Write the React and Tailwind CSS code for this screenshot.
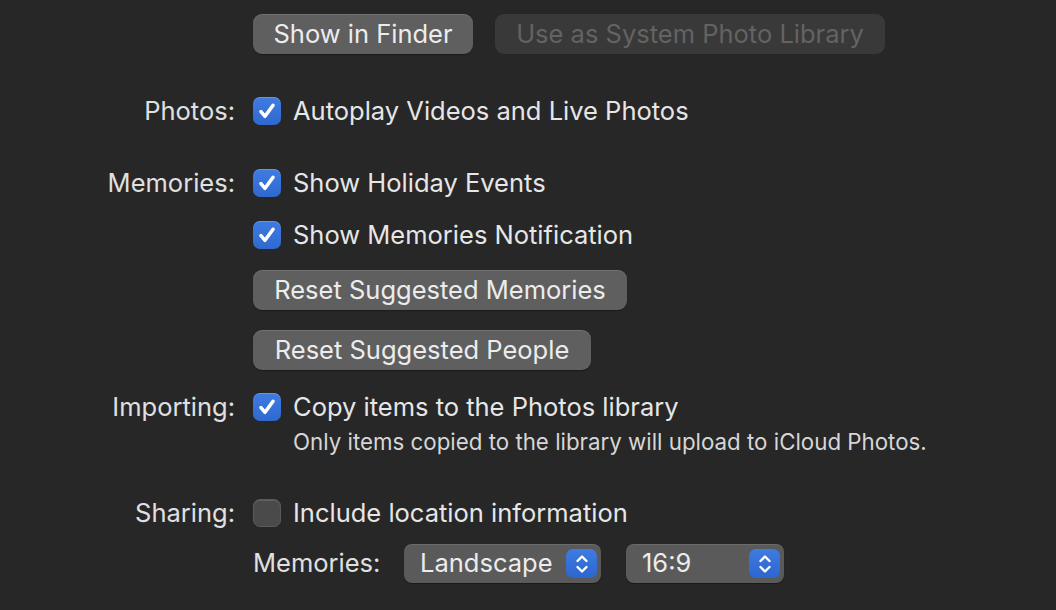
const font = { fontFamily: "Inter, 'Noto Sans', 'Liberation Sans', sans-serif" };

function Check({ on }) {
  if (!on) {
    return (
      <span className="inline-block h-[28px] w-[28px] shrink-0 rounded-[7px] border border-[#5a5a5a] bg-[#4a4a4a] shadow-[inset_0_1px_0_rgba(255,255,255,0.12)]" />
    );
  }
  return (
    <span className="inline-flex h-[28px] w-[28px] shrink-0 items-center justify-center rounded-[7px] bg-gradient-to-b from-[#3f7be0] to-[#2f69d0] shadow-[inset_0_1px_0_rgba(255,255,255,0.2)]">
      <svg width="22" height="22" viewBox="0 0 20 20" fill="none">
        <path d="M4.5 10.5 L8.2 14.8 L15.5 4.8" stroke="#ffffff" strokeWidth="3.2" strokeLinecap="round" strokeLinejoin="round" />
      </svg>
    </span>
  );
}

function Button({ children, disabled, className = "" }) {
  return (
    <div
      className={`flex h-[40px] items-center justify-center rounded-[9px] text-[25.5px] ${
        disabled
          ? "bg-[#393939] text-[#636363]"
          : "bg-[#5f5f5f] text-[#ececec] shadow-[inset_0_1px_0_rgba(255,255,255,0.12),0_1px_1px_rgba(0,0,0,0.3)]"
      } ${className}`}
    >
      {children}
    </div>
  );
}

function Stepper() {
  return (
    <span className="flex h-[29px] w-[31px] items-center justify-center rounded-[7px] bg-gradient-to-b from-[#3f7be0] to-[#2c66cf]">
      <svg width="16" height="22" viewBox="0 0 16 22" fill="none">
        <path d="M3.5 8 L8 3.5 L12.5 8" stroke="#fff" strokeWidth="2.4" strokeLinecap="round" strokeLinejoin="round" />
        <path d="M3.5 14 L8 18.5 L12.5 14" stroke="#fff" strokeWidth="2.4" strokeLinecap="round" strokeLinejoin="round" />
      </svg>
    </span>
  );
}

function Popup({ value, width }) {
  return (
    <div
      className={`flex h-[39px] items-center justify-between rounded-[8px] bg-[#5a5a5a] pl-[16px] pr-[4px] text-[25.5px] text-[#ececec] shadow-[inset_0_1px_0_rgba(255,255,255,0.1),0_1px_1px_rgba(0,0,0,0.35)] ${width}`}
    >
      <span>{value}</span>
      <Stepper />
    </div>
  );
}

function Row({ label, children, className = "" }) {
  return (
    <div className={`flex items-center ${className}`}>
      <div className="w-[235px] shrink-0 whitespace-nowrap text-right text-[25.5px] text-[#e0e0e0]">{label}</div>
      <div className="ml-[18px] flex items-center">{children}</div>
    </div>
  );
}

function CheckRow({ label, text, on = true, className = "" }) {
  return (
    <Row label={label} className={`h-[28px] ${className}`}>
      <Check on={on} />
      <span className="ml-[12px] whitespace-nowrap text-[25.5px] text-[#e6e6e6]">{text}</span>
    </Row>
  );
}

export default function App() {
  return (
    <div className="h-[610px] w-[1056px] overflow-hidden bg-[#272727] antialiased" style={font}>
      <div className="flex flex-col">
        <Row label="" className="mt-[14px]">
          <Button className="w-[220px]">Show in Finder</Button>
          <Button disabled className="ml-[22px] w-[390px]">Use as System Photo Library</Button>
        </Row>

        <CheckRow label="Photos:" text="Autoplay Videos and Live Photos" className="mt-[43px]" />

        <CheckRow label="Memories:" text="Show Holiday Events" className="mt-[44px]" />
        <CheckRow label="" text="Show Memories Notification" className="mt-[24px]" />
        <Row label="" className="mt-[21px]">
          <Button className="w-[374px]">Reset Suggested Memories</Button>
        </Row>
        <Row label="" className="mt-[20px]">
          <Button className="w-[338px]">Reset Suggested People</Button>
        </Row>

        <CheckRow label="Importing:" text="Copy items to the Photos library" className="mt-[23px]" />
        <Row label="" className="mt-[10px] h-[22px]">
          <span className="ml-[40px] whitespace-nowrap text-[22.3px] text-[#d6d6d6]">
            Only items copied to the library will upload to iCloud Photos.
          </span>
        </Row>

        <CheckRow label="Sharing:" text="Include location information" on={false} className="mt-[46px]" />
        <Row label="" className="mt-[17px]">
          <span className="w-[151px] whitespace-nowrap text-[25.5px] text-[#e0e0e0]">Memories:</span>
          <Popup value="Landscape" width="w-[197px]" />
          <div className="ml-[25px]">
            <Popup value="16:9" width="w-[158px]" />
          </div>
        </Row>
      </div>
    </div>
  );
}
